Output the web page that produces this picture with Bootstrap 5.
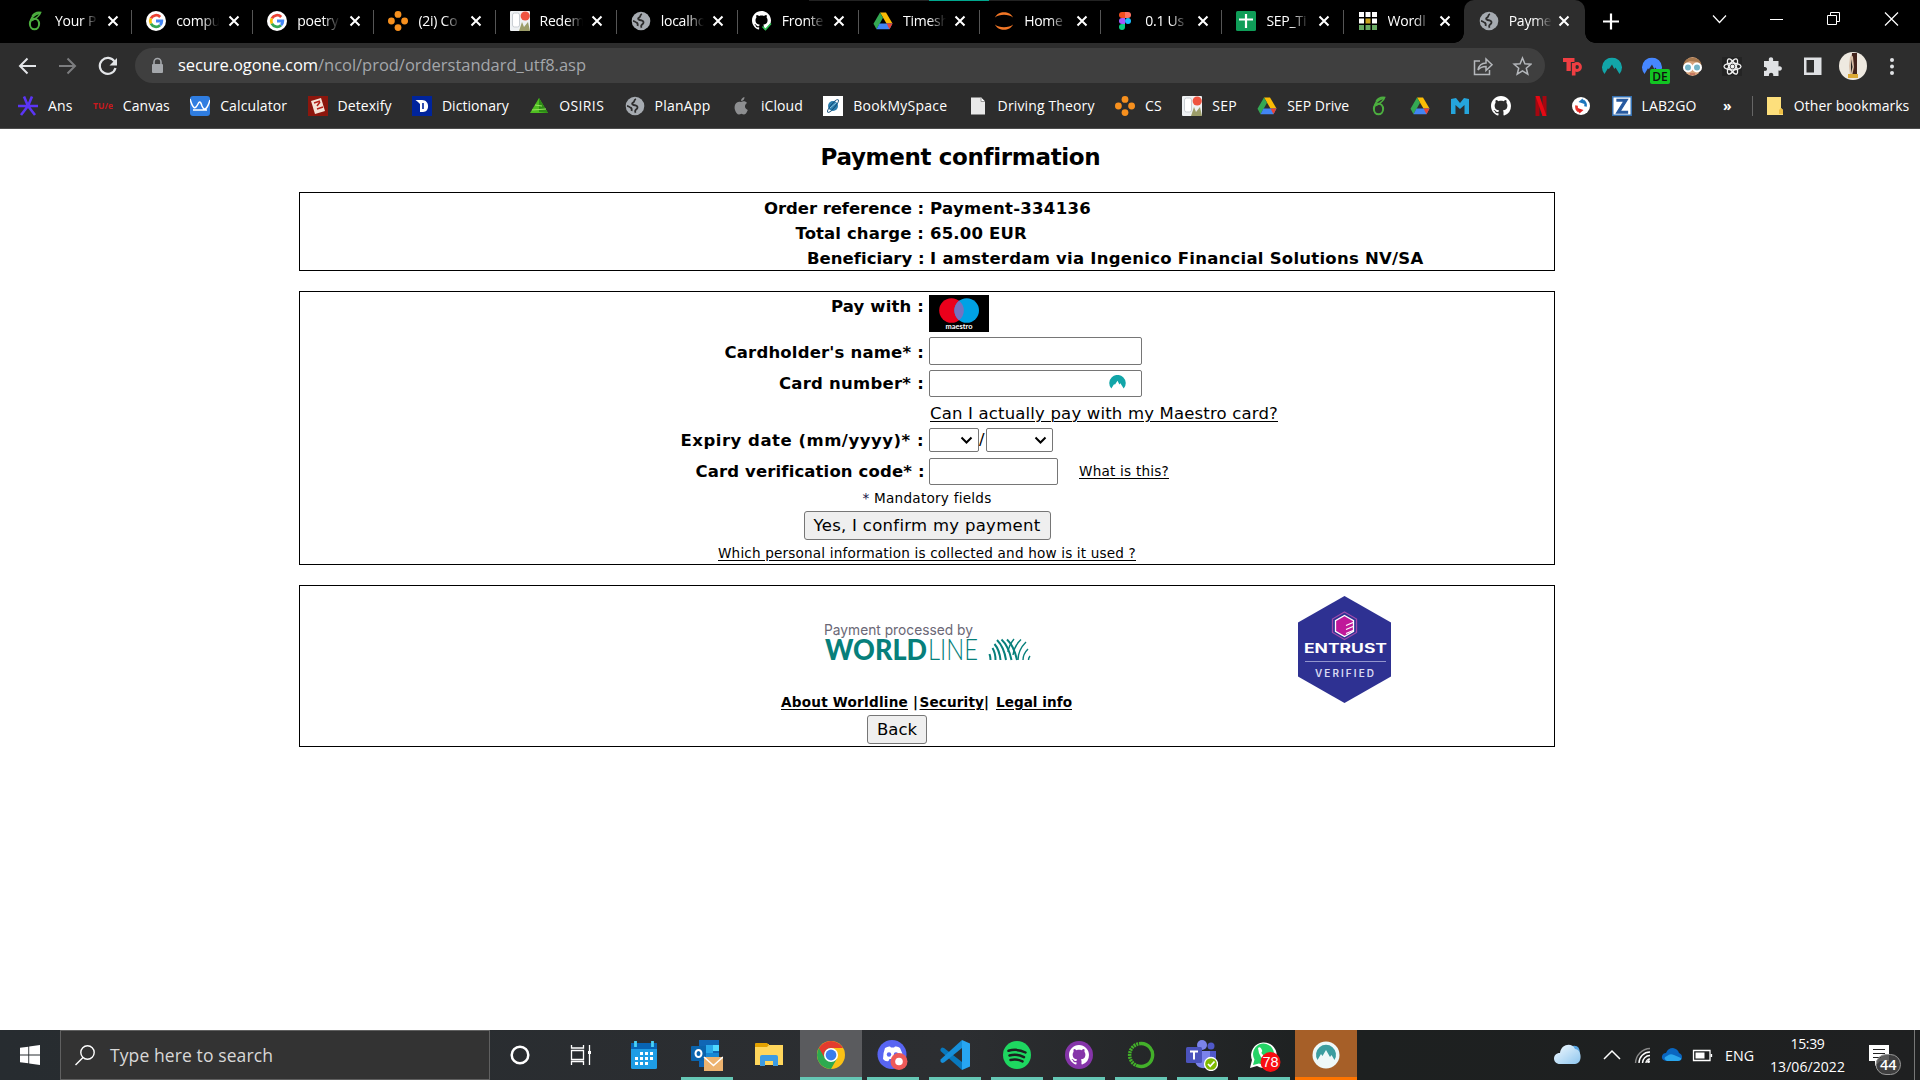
<!DOCTYPE html>
<html lang="en">
<head>
<meta charset="utf-8">
<title>Payment confirmation</title>
<link href="https://cdn.jsdelivr.net/npm/bootstrap@5.3.0/dist/css/bootstrap.min.css" rel="stylesheet">
<style>
:root{--ui:"Open Sans","Noto Sans",sans-serif;--page:"DejaVu Sans",sans-serif}
body{width:1920px;height:1080px;overflow:hidden;font-family:var(--page);color:#000;background:#fff}
svg{display:block;flex:none}
[data-w]{display:inline-block;white-space:pre;flex:none}
.tabstrip{height:43px;background:#000;font-family:var(--ui);font-size:14px;color:#fff;padding-left:10px}
.topline{left:809px;top:0;width:301px;height:1px;background:linear-gradient(90deg,#222 120px,#00a78e 120px,#00a78e 180px,#222 180px)}
.tab{width:121.15px;height:43px;padding:0 0 2px 15px}
.tab + .tab::before{content:"";position:absolute;left:0;top:10px;width:1px;height:24px;background:#555}
.tab-name{width:43px;margin-left:10px;overflow:hidden;white-space:nowrap;letter-spacing:-.25px;-webkit-mask-image:linear-gradient(90deg,#000 60%,transparent);mask-image:linear-gradient(90deg,#000 60%,transparent)}
.tab-x{margin-left:8.5px}
.tab.current{background:#2d2d2d;border-radius:10px 10px 0 0}
.tab.current .tab-x{margin-left:6.5px}
.tab.current::before{display:none}
.tab.current::after{content:"";position:absolute;left:-10px;right:-10px;bottom:0;height:10px;background:radial-gradient(circle at 0 0,transparent 9.5px,#2d2d2d 10px) left/10px 10px no-repeat,radial-gradient(circle at 100% 0,transparent 9.5px,#2d2d2d 10px) right/10px 10px no-repeat}
.toolrow{height:45px;background:#2d2d2d;padding-left:17px}
.omni{width:1410px;height:35px;border-radius:18px;background:#3f3f3f;margin-left:17px;padding:0 13px;font-family:var(--ui);font-size:16.5px;color:#fff}
.muted-url{color:#a4a7ab}
.marks{height:41px;background:#2d2d2d;border-bottom:1px solid #4d4d4d;padding:0 0 5px 18px;font-family:var(--ui);font-size:14px;color:#fff;gap:20.35px}
.bm{gap:10px}
.more-marks{margin-left:6px}
.other-marks{margin-right:13px}
.page{height:901px;padding-left:299px}
.page-title{font-size:23px;font-weight:700;width:1256px;height:63px;padding:12px 0 0 66px;line-height:32px}
.panel{width:1256px;border:1px solid #000;margin-bottom:20px}
.line-row{font-size:16.5px;line-height:20px}
.lab{width:624px;font-weight:700;text-align:right;margin-right:5px}
.val{padding-left:1px}
.box-in{border:1px solid #767676;border-radius:2px;background:#fff}
.btn-old{border:1px solid #767676;border-radius:3px;background:#efefef;height:29px;font-size:16.5px;line-height:27px;color:#000}
.small-t{font-size:13.6px;line-height:18px}
.page a{color:#000;text-decoration:underline;text-underline-offset:2px;text-decoration-thickness:1px}
.task{height:50px;background:linear-gradient(90deg,#272c30 0,#2c2e31 50%,#1d2020 70%,#1f2021 100%);font-family:var(--ui);color:#fff}
.findbox{width:430px;height:50px;background:#333;border:1px solid #606060;font-size:17.5px;color:#d8d8d8;padding-left:13px}
.app{width:61.95px;height:50px}
.app.on::after{content:"";position:absolute;left:5px;right:5px;bottom:0;height:3px;background:#65c7b5}
.app.live{background:#5a5b5e}.app.live::after{left:0;right:0}
.app.alert-app{background:#a65f28}.app.alert-app::after{background:#ff7400;left:0;right:0}
</style>
<script src="https://cdn.jsdelivr.net/npm/bootstrap@5.3.0/dist/js/bootstrap.bundle.min.js"></script>
</head>
<body class="d-flex flex-column">
<svg width="0" height="0" class="position-absolute">
<symbol id="globe" viewBox="0 0 20 20"><circle cx="10" cy="10" r="9.3" fill="#a6abb1"/><path d="M11 3c-2.500.8-1 2.400-2.600 3.400C6.800 7.200 6.500 8.700 8.500 9c2 .2 4.200.4 4 2.600-.2 1.800-1.800 1.500-2.300 3.200-.2.8.1 1.500.4 2M2 9.800c1.800.2 2.400 1.500 3.600 1.900 1.500.6 1.200 2 1 3.300" fill="none" stroke="#2d2d2d" stroke-width="1.800"/></symbol>
<symbol id="google" viewBox="0 0 20 20"><circle cx="10" cy="10" r="10" fill="#fff"/><g fill="none" stroke-width="2.800"><path d="M4.900 7.300A5.800 5.800 0 0 1 14.200 6" stroke="#ea4335"/><path d="M4.900 12.700a5.800 5.800 0 0 1 0-5.400" stroke="#fbbc05"/><path d="M14 14.200a5.800 5.800 0 0 1-9.100-1.500" stroke="#34a853"/><path d="M10 10h5.800c0 1.700-.6 3.200-1.800 4.200" stroke="#4285f4"/></g></symbol>
<symbol id="leaf" viewBox="0 0 20 20"><ellipse cx="9.500" cy="13" rx="4.600" ry="5.300" fill="none" stroke="#4caf3f" stroke-width="2"/><path d="M5 13C5 8 7.500 4 15.500 1.800 14 6 10.500 7.500 7 9.500M7 5.500C9 2 13 1 16 1.500" fill="none" stroke="#4caf3f" stroke-width="1.500"/></symbol>
<symbol id="dots" viewBox="0 0 20 20"><g fill="#f7901e"><circle cx="10" cy="3.400" r="3.400"/><circle cx="10" cy="16.600" r="3.400"/><circle cx="3.400" cy="10" r="3.400"/><circle cx="16.600" cy="10" r="3.400"/></g></symbol>
<symbol id="sep" viewBox="0 0 20 20"><rect width="20" height="20" rx="1" fill="#eef1f3"/><rect x="2.500" y="2" width="7" height="14" rx="2" fill="#fff" stroke="#c9ced3"/><path d="M9 20l3-9 2 5 4-5 2 9z" fill="#9c9d69"/><circle cx="15.200" cy="5" r="4.600" fill="#ee5340"/></symbol>
<symbol id="drive" viewBox="0 0 20 20"><path d="M7 1.500h6l6.500 11h-6z" fill="#fbbc04"/><path d="M7 1.500l3 5.200-6.500 11.500-3-5.500z" fill="#34a853"/><path d="M6.500 12.500h13l-3 5.700h-13z" fill="#4285f4"/><path d="M13.500 12.500h6l-3 5.700z" fill="#ea4335"/></symbol>
<symbol id="cat" viewBox="0 0 16 16"><path fill="currentColor" d="M8 0C3.580 0 0 3.580 0 8c0 3.540 2.290 6.530 5.470 7.590.4.070.55-.17.55-.38 0-.19-.01-.82-.01-1.490-2.010.37-2.530-.49-2.690-.94-.09-.23-.48-.94-.82-1.130-.28-.15-.68-.52-.01-.53.63-.01 1.080.58 1.230.82.72 1.210 1.870.87 2.330.66.070-.52.280-.87.510-1.070-1.780-.2-3.640-.89-3.640-3.950 0-.87.310-1.590.82-2.150-.08-.2-.36-1.020.08-2.120 0 0 .67-.21 2.200.82.640-.18 1.320-.27 2-.27s1.360.09 2 .27c1.530-1.040 2.200-.82 2.200-.82.440 1.100.160 1.920.080 2.120.51.560.82 1.270.82 2.150 0 3.070-1.870 3.750-3.650 3.950.29.250.54.730.54 1.480 0 1.070-.01 1.930-.01 2.200 0 .21.150.46.550.38A8.010 8.010 0 0 0 16 8c0-4.420-3.580-8-8-8"/></symbol>
<symbol id="peak" viewBox="0 0 20 17"><path fill="currentColor" d="M2.500 16.500A10 10 0 1 1 17.500 16.500L13.500 10 12.300 11.500 10 7 6.800 11.800 6 10.800z"/></symbol>
<symbol id="ex" viewBox="0 0 12 12"><path d="M1.500 1.500l9 9m0-9l-9 9" stroke="#fff" stroke-width="2"/></symbol>
</svg>

<div class="tabstrip d-flex position-relative">
 <div class="topline position-absolute"></div>
 <div class="tab d-flex align-items-center position-relative"><svg width="20" height="20"><use href="#leaf"/></svg><span class="tab-name">Your P</span><svg class="tab-x" width="12" height="12"><use href="#ex"/></svg></div>
 <div class="tab d-flex align-items-center position-relative"><svg width="20" height="20"><use href="#google"/></svg><span class="tab-name">compu</span><svg class="tab-x" width="12" height="12"><use href="#ex"/></svg></div>
 <div class="tab d-flex align-items-center position-relative"><svg width="20" height="20"><use href="#google"/></svg><span class="tab-name">poetry</span><svg class="tab-x" width="12" height="12"><use href="#ex"/></svg></div>
 <div class="tab d-flex align-items-center position-relative"><svg width="20" height="20"><use href="#dots"/></svg><span class="tab-name">(2i) Co</span><svg class="tab-x" width="12" height="12"><use href="#ex"/></svg></div>
 <div class="tab d-flex align-items-center position-relative"><svg width="20" height="20"><use href="#sep"/></svg><span class="tab-name">Redem</span><svg class="tab-x" width="12" height="12"><use href="#ex"/></svg></div>
 <div class="tab d-flex align-items-center position-relative"><svg width="20" height="20"><use href="#globe"/></svg><span class="tab-name">localho</span><svg class="tab-x" width="12" height="12"><use href="#ex"/></svg></div>
 <div class="tab d-flex align-items-center position-relative"><svg width="20" height="20" viewBox="0 0 20 20"><use href="#cat" width="19" height="19"/><path d="M9 15l4 4 7-8v9H9z" fill="#000"/><path d="M10.500 15.500l3 3 5.500-6" stroke="#2fc053" stroke-width="1.600" fill="none"/></svg><span class="tab-name">Fronte</span><svg class="tab-x" width="12" height="12"><use href="#ex"/></svg></div>
 <div class="tab d-flex align-items-center position-relative"><svg width="20" height="20"><use href="#drive"/></svg><span class="tab-name">Timesh</span><svg class="tab-x" width="12" height="12"><use href="#ex"/></svg></div>
 <div class="tab d-flex align-items-center position-relative"><svg width="20" height="20" viewBox="0 0 20 20"><path d="M1 6.500C4-.5 16-.5 19 6.500 15 2.800 5 2.800 1 6.500zM1 13.500c3 7 15 7 18 0-4 3.700-14 3.700-18 0z" fill="#f37726"/></svg><span class="tab-name">Home</span><svg class="tab-x" width="12" height="12"><use href="#ex"/></svg></div>
 <div class="tab d-flex align-items-center position-relative"><svg width="20" height="20" viewBox="0 0 20 20"><path d="M10 1H7a3 3 0 0 0 0 6h3z" fill="#f24e1e"/><path d="M10 1h3a3 3 0 0 1 0 6h-3z" fill="#ff7262"/><path d="M10 7H7a3 3 0 0 0 0 6h3z" fill="#a259ff"/><circle cx="13" cy="10" r="3" fill="#1abcfe"/><path d="M10 13H7a3 3 0 1 0 3 3z" fill="#0acf83"/></svg><span class="tab-name">0.1 Us</span><svg class="tab-x" width="12" height="12"><use href="#ex"/></svg></div>
 <div class="tab d-flex align-items-center position-relative"><svg width="20" height="20" viewBox="0 0 20 20"><rect width="20" height="20" rx="1.500" fill="#0f9d58"/><path d="M10 3v14M3 8.500h14" stroke="#fff" stroke-width="2.200"/></svg><span class="tab-name">SEP_Ti</span><svg class="tab-x" width="12" height="12"><use href="#ex"/></svg></div>
 <div class="tab d-flex align-items-center position-relative"><svg width="20" height="20" viewBox="0 0 20 20"><path fill="#fff" d="M1 1h5v5H1zM7.500 1h5v5h-5zM14 1h5v5h-5zM1 7.500h5v5H1zM14 7.500h5v5h-5z"/><path fill="#c9a520" d="M7.500 7.500h5v5h-5z"/><path fill="#6aaa64" d="M1 14h5v5H1zM7.500 14h5v5h-5zM14 14h5v5h-5z"/></svg><span class="tab-name">Wordl</span><svg class="tab-x ms-2" width="12" height="12"><use href="#ex"/></svg></div>
 <div class="tab current d-flex align-items-center position-relative"><svg width="20" height="20"><use href="#globe"/></svg><span class="tab-name">Payme</span><svg class="tab-x" width="12" height="12"><use href="#ex"/></svg></div>
 <div class="d-flex align-items-center ms-auto pb-1">
  <svg width="335" height="40" viewBox="1585 0 335 40" fill="none" stroke="#fff"><path d="M1603 21.500h16M1611 13.500v16" stroke-width="2.200"/><path d="M1713 15.500l6.500 7 6.500-7" stroke-width="1.200"/><path d="M1770 19.500h13"/><path d="M1827.500 15.500h9v9h-9zM1830.500 15v-2.500h9v9H1837"/><path d="M1885 12.500l13 13m0-13l-13 13" stroke-width="1.200"/></svg>
 </div>
</div>

<div class="toolrow d-flex align-items-center">
 <svg width="101" height="22" viewBox="17 54 101 22" fill="none" stroke-width="2"><path d="M36 65H20m7.500-7.500L20 65l7.500 7.500" stroke="#e3e5e8"/><path d="M59 65h16m-7.500-7.500L75 65l-7.500 7.500" stroke="#7c7d7f"/><path d="M114.500 60.500A8 8 0 1 0 115.500 67" stroke="#e3e5e8" stroke-width="2.200"/><path d="M117 57v7.500h-7.500z" fill="#e3e5e8"/></svg>
 <div class="omni d-flex align-items-center">
  <svg width="30" height="18" viewBox="0 0 30 18"><path d="M6 7V5a3.500 3.500 0 0 1 7 0v2" fill="none" stroke="#a4a7ab" stroke-width="1.600"/><rect x="4" y="7" width="11" height="9" rx="1" fill="#a4a7ab"/></svg>
  <span data-w="140">secure.ogone.com</span><span data-w="268" class="muted-url">/ncol/prod/orderstandard_utf8.asp</span>
  <svg class="ms-auto" width="60" height="22" viewBox="1472 54 60 22" fill="none" stroke="#b4b7bb" stroke-width="1.500"><path d="M1480 60h-5.500v13.500h15V69M1478 69c1-5 4-7 8-7v-4l6 5.800-6 5.700v-4c-4 0-6 1-8 3.500z"/><path d="M1522.500 57l2.400 5.700 6 .5-4.600 4 1.500 6-5.300-3.300-5.300 3.300 1.500-6-4.600-4 6-.5z"/></svg>
 </div>
 <svg class="ms-1" width="360" height="44" viewBox="1549 43 360 44">
  <path d="M1563 57h11.500v4h-3.700v9h-4.300v-9h-3.500z" fill="#ef3e42"/><path d="M1573.700 74.500V62" stroke="#ef3e42" stroke-width="3.600"/><circle cx="1577" cy="66" r="3.400" fill="none" stroke="#ef3e42" stroke-width="3"/>
  <use href="#peak" x="1602" y="56.500" width="20" height="17" color="#12a5a8"/>
  <use href="#peak" x="1642" y="56.500" width="20" height="17" color="#4687ff"/><rect x="1650" y="68" width="20" height="15" rx="2" fill="#12c422"/><text x="1660" y="80" font-size="12" font-weight="600" text-anchor="middle" font-family="Open Sans" fill="#111">DE</text>
  <ellipse cx="1692.500" cy="65.500" rx="8.500" ry="9.500" fill="#d9a47c"/><path d="M1683.500 65c-.5-11 18.500-11 18 0l-4-4-8-1-5 3z" fill="#a87a50"/><g fill="#75b5c8" stroke="#fff" stroke-width="2"><circle cx="1688" cy="66.500" r="4"/><circle cx="1697" cy="66.500" r="4"/></g><path d="M1690 73h5" stroke="#b7504a"/>
  <rect x="1722" y="56" width="20" height="19" fill="#242424"/><g fill="none" stroke="#f4f4f4" stroke-width="1.300" transform="translate(1732.500 65.500)"><ellipse rx="8.500" ry="3.300"/><ellipse rx="8.500" ry="3.300" transform="rotate(60)"/><ellipse rx="8.500" ry="3.300" transform="rotate(120)"/><circle r="1.300" fill="#fff"/></g>
  <path fill="#dfe1e4" d="M1764 60h5c-1.500-5 5.500-5 4 0h5.500v5.500c4.500-1.200 4.500 5.200 0 4V75h-5.300c1-4.500-5.200-4.500-4.200 0h-5v-5.200c4 1 4-4.800 0-3.800z"/>
  <path fill-rule="evenodd" fill="#dfe1e4" d="M1804 56.500h17.500v17.500H1804zM1806.500 59v12.500h7.500V59z"/>
  <circle cx="1853" cy="65" r="14" fill="#eee9e0"/><path d="M1852 52h5v25h-7z" fill="#43231c"/><path d="M1850 56q2-3 3 0l1 10-2 9h-2l-1-10z" fill="#d8bfa8"/><path d="M1851 58l1.500 8-1.500 6z" fill="#222"/><path d="M1848 73h10v4h-10z" fill="#dcaa35"/>
  <g fill="#dfe1e4"><circle cx="1892" cy="59" r="2"/><circle cx="1892" cy="65.500" r="2"/><circle cx="1892" cy="72" r="2"/></g>
 </svg>
</div>

<div class="marks d-flex align-items-center">
 <div class="bm d-flex align-items-center"><svg width="20" height="20" viewBox="0 0 20 20"><path d="M10 10h10M10 10l-7 9M10 10L6 .5M10 10L14 .5M10 10H0M10 10l7 9" stroke="#5b35f5" stroke-width="2.600"/></svg><span data-w="24.500">Ans</span></div>
 <div class="bm d-flex align-items-center"><svg width="20" height="20" viewBox="0 0 20 20"><text x="0" y="13" textLength="20" lengthAdjust="spacingAndGlyphs" font-size="8.500" font-weight="700" fill="#c8191e" font-family="Open Sans">TU/e</text></svg><span data-w="47">Canvas</span></div>
 <div class="bm d-flex align-items-center"><svg width="20" height="20" viewBox="0 0 20 20"><rect width="20" height="20" rx="3" fill="#2f7de1"/><path d="M0 3c3 10 5 11 8 5 2-4 3-1 4 2 2 5 5 4 8-6M3 14h14" fill="none" stroke="#fff" stroke-width="1.500"/></svg><span data-w="67">Calculator</span></div>
 <div class="bm d-flex align-items-center"><svg width="20" height="20" viewBox="0 0 20 20"><rect width="20" height="20" fill="#8c160d"/><path d="M3 5l10-3 4 13-10 3z" fill="#f4e3d7"/><path d="M6 7l6-2M9 13l6-2M9 10l3-4" stroke="#b42219" stroke-width="1.500"/></svg><span data-w="54">Detexify</span></div>
 <div class="bm d-flex align-items-center"><svg width="20" height="20" viewBox="0 0 20 20"><rect width="20" height="20" fill="#00249c"/><path d="M3.500 4H10c8 0 8 12 1 12H8V8L6 6z" fill="#fff"/><path d="M11 7v6" stroke="#00249c" stroke-width="1.600"/></svg><span data-w="67">Dictionary</span></div>
 <div class="bm d-flex align-items-center"><svg width="20" height="20" viewBox="0 0 20 20"><path d="M10 2l9 15H1z" fill="#4fbe21"/><path d="M10 2l9 15-9-1z" fill="#2d8b16"/><path d="M3 14l14-1M6 9l7 1" stroke="#96e45e"/></svg><span data-w="45">OSIRIS</span></div>
 <div class="bm d-flex align-items-center"><svg width="20" height="20"><use href="#globe"/></svg><span data-w="56">PlanApp</span></div>
 <div class="bm d-flex align-items-center"><svg width="20" height="20" viewBox="0 0 20 20"><path d="M10 6c2-1.500 5-1 6 1-3 2-2.500 5.500.8 7C15 19 13 19 10.500 17.700 7 19.500 5.500 18 4 14 2.500 9 5.500 4.500 10 6zM10 5c0-2 1.500-3.500 3.500-4 0 2.500-1.500 4-3.500 4z" fill="#8d8e90"/></svg><span data-w="42">iCloud</span></div>
 <div class="bm d-flex align-items-center"><svg width="20" height="20" viewBox="0 0 20 20"><rect width="20" height="20" fill="#fff"/><circle cx="10" cy="10" r="5" fill="#2b7dad"/><ellipse cx="10" cy="10" rx="8" ry="2" transform="rotate(-50 10 10)" fill="none" stroke="#144d77"/><path d="M7 12l6-5" stroke="#8cc4e0"/></svg><span data-w="94">BookMySpace</span></div>
 <div class="bm d-flex align-items-center"><svg width="20" height="20" viewBox="0 0 20 20"><path d="M3 1.500h10l4 4v13H3z" fill="#e9e9e9"/><path d="M13 1.500v4h4" fill="#fff" stroke="#999"/></svg><span data-w="97">Driving Theory</span></div>
 <div class="bm d-flex align-items-center"><svg width="20" height="20"><use href="#dots"/></svg><span data-w="17">CS</span></div>
 <div class="bm d-flex align-items-center"><svg width="20" height="20"><use href="#sep"/></svg><span data-w="24.500">SEP</span></div>
 <div class="bm d-flex align-items-center"><svg width="20" height="20"><use href="#drive"/></svg><span data-w="62">SEP Drive</span></div>
 <svg width="20" height="20"><use href="#leaf"/></svg>
 <svg width="20" height="20"><use href="#drive"/></svg>
 <svg width="20" height="20" viewBox="0 0 20 20"><path d="M1 3l5-1 4 5 4-5 5 1v15h-4.500V9L10 13 5.500 9v9H1z" fill="#25a5dc"/></svg>
 <svg width="20" height="20" color="#fff"><use href="#cat"/></svg>
 <svg width="20" height="20" viewBox="0 0 20 20"><path d="M4.500 0h4v20h-4zM11.500 0h4v20h-4z" fill="#a60710"/><path d="M4.500 0h4l7 20h-4z" fill="#e50914"/></svg>
 <svg width="20" height="20" viewBox="0 0 20 20"><circle cx="10" cy="10" r="9" fill="#fff"/><path d="M8 15.500a6 6 0 0 1-2.500-6" fill="none" stroke="#e6352b" stroke-width="2.600"/><path d="M6.500 12l6 2-4 3.500z" fill="#e01f20"/><path d="M12 4.500a6 6 0 0 1 2.500 6" fill="none" stroke="#1b76bd" stroke-width="2.600"/><path d="M13.500 8l-6-2 4-3.500z" fill="#1b76bd"/></svg>
 <div class="bm d-flex align-items-center"><svg width="20" height="20" viewBox="0 0 20 20"><rect x=".75" y=".75" width="18.500" height="18.500" fill="#fff" stroke="#3470b2" stroke-width="1.500"/><path d="M5 3.500h10.500L8 15.500h7.500v1.500H4.500L12 5H5z" fill="#275aa0" stroke="#275aa0" stroke-width="1.300"/></svg><span data-w="55">LAB2GO</span></div>
 <span class="more-marks fw-bold">»</span>
 <div class="other-marks bm d-flex align-items-center ms-auto"><svg width="32" height="20" viewBox="0 0 32 20"><path d="M.5 0v20" stroke="#666"/><path d="M15 1h14v11l2 2v5H15z" fill="#fddf7c"/><path d="M29 12l2 2v4h-4v-4z" fill="#eebf46"/></svg><span data-w="115.500">Other bookmarks</span></div>
</div>

<main class="page">
 <div class="page-title d-flex justify-content-center"><span data-w="279">Payment confirmation</span></div>
 <section class="panel" style="height:79px;padding-top:3px">
  <div class="line-row d-flex align-items-center" style="height:25px"><div class="lab"><span data-w="160">Order reference :</span></div><b class="val" data-w="162">Payment-334136</b></div>
  <div class="line-row d-flex align-items-center" style="height:25px"><div class="lab"><span data-w="128.500">Total charge :</span></div><b class="val" data-w="98">65.00 EUR</b></div>
  <div class="line-row d-flex align-items-center" style="height:25px"><div class="lab"><span data-w="117">Beneficiary :</span></div><b class="val" data-w="494.500">I amsterdam via Ingenico Financial Solutions NV/SA</b></div>
 </section>
 <section class="panel d-flex flex-column" style="height:274px;padding-top:3px">
  <div class="line-row d-flex" style="height:42px"><div class="lab" style="padding-top:2px"><span data-w="93">Pay with :</span></div>
   <svg width="60" height="37" viewBox="0 0 60 37"><rect width="60" height="37"/><circle cx="22.500" cy="15.500" r="12.300" fill="#eb001b"/><circle cx="37.700" cy="15.500" r="12.300" fill="#00a2e5"/><path d="M30.100 5.800a12.300 12.300 0 0 1 0 19.400 12.300 12.300 0 0 1 0-19.400z" fill="#7673c0"/><text x="16.500" y="34" textLength="27" lengthAdjust="spacingAndGlyphs" font-size="7.500" font-weight="700" fill="#fff" font-family="Lato">maestro</text></svg></div>
  <div class="line-row d-flex align-items-center" style="height:28px"><div class="lab pt-1"><span data-w="199.500">Cardholder's name* :</span></div><div class="box-in" style="width:213px;height:28px"></div></div>
  <div class="line-row d-flex align-items-center" style="height:36px"><div class="lab" style="padding-top:2px"><span data-w="145">Card number* :</span></div><div class="box-in d-flex justify-content-end" style="width:213px;height:27px;padding:4px 15px"><svg width="17" height="14" color="#12a5a8"><use href="#peak"/></svg></div></div>
  <div class="line-row d-flex align-items-center" style="height:24px;margin-left:629px;padding-top:2px"><a href="#" class="val" data-w="349">Can I actually pay with my Maestro card?</a></div>
  <div class="line-row d-flex align-items-center" style="height:28px;margin-top:1px"><div class="lab" style="padding-top:1px"><span data-w="243.500">Expiry date (mm/yyyy)* :</span></div>
   <div class="box-in d-flex align-items-center justify-content-end pe-1" style="width:50px;height:24px"><svg width="14" height="8" viewBox="0 0 14 8"><path d="M1.500 1.500l5 5 5-5" fill="none" stroke="#000" stroke-width="2"/></svg></div><span data-w="7">/</span><div class="box-in d-flex align-items-center justify-content-end pe-1" style="width:67px;height:24px"><svg width="14" height="8" viewBox="0 0 14 8"><path d="M1.500 1.500l5 5 5-5" fill="none" stroke="#000" stroke-width="2"/></svg></div></div>
  <div class="line-row d-flex align-items-center" style="height:32px;margin-top:1px"><div class="lab" style="padding-top:1px"><span data-w="228.500">Card verification code* :</span></div><div class="box-in" style="width:129px;height:27px"></div><a href="#" class="small-t" style="margin-left:21px" data-w="90">What is this?</a></div>
  <div class="small-t d-flex justify-content-center align-items-center" style="height:22px"><span data-w="129"><span style="color:#114">*</span> Mandatory fields</span></div>
  <div class="d-flex justify-content-center" style="padding-top:2px"><button type="button" class="btn-old p-0" style="width:247px"><span data-w="227">Yes, I confirm my payment</span></button></div>
  <div class="small-t d-flex justify-content-center" style="padding-top:4px"><a href="#" data-w="418">Which personal information is collected and how is it used ?</a></div>
 </section>
 <section class="panel" style="height:162px">
  <div class="d-flex" style="height:107px">
   <svg width="1254" height="120" viewBox="300 586 1254 120" style="overflow:visible">
    <text x="824" y="635" font-size="14.500" font-family="Inter" textLength="149" lengthAdjust="spacingAndGlyphs" fill="#6b6876">Payment processed by</text>
    <g font-family="Lato" fill="#077f7b"><text x="825" y="659.500" font-size="28.500" font-weight="900" textLength="102" lengthAdjust="spacingAndGlyphs">WORLD</text><text x="928" y="659.500" font-size="28.500" font-weight="300" textLength="50" lengthAdjust="spacingAndGlyphs">LINE</text></g>
    <g fill="none" stroke="#077f7b" stroke-width="2"><path d="M990.500 660q0-3-1-6M995.500 660q0-7-3-12M1000.500 660q-1-10-6-16M1006 660q-2-13-9-20M1011.500 660q-3-14-10-20.500M1017 660q-3-14-10-20.500"/><path d="M1008 652q1-7 6-13M1013 655q1-9 8-15.500M1018 660q0-10 8-18M1023 660q0-6 5-11M1028.500 660q0-2 1.500-4" stroke-width="1.400"/></g>
    <path d="M1344.500 596L1391 622.500v54L1344.500 703 1298 676.500v-54z" fill="#2e3192"/>
    <path d="M1344.500 612l12 7v13.500l-12 7-12-7V619z" fill="#2e3192" stroke="#a04aab" stroke-width="1.300"/><path d="M1344.500 615.500l9 5.200v10.600l-9 5.200-9-5.200v-10.600z" fill="#c0189a" stroke="#fff" stroke-width="1.300"/><path d="M1346 625.500l7-3M1346 629.500l7-3M1346 633.500l7-3" stroke="#fff" stroke-width="1.300"/>
    <text x="1304" y="653" font-size="12.500" font-weight="700" textLength="83" lengthAdjust="spacingAndGlyphs" fill="#fff" font-family="Inter">ENTRUST</text><path d="M1305 661.500h81" stroke="#9496ce"/><text x="1315" y="677" font-size="10" font-weight="600" textLength="59" fill="#d9daf2" font-family="Inter">VERIFIED</text>
   </svg></div>
  <div class="small-t fw-bold d-flex" style="padding-left:481px;height:22px"><a href="#" data-w="127">About Worldline</a><span data-w="11.500" style="padding-left:5px">|</span><a href="#" data-w="64.500">Security</a><span data-w="12">|</span><a href="#" data-w="76">Legal info</a></div>
  <button type="button" class="btn-old p-0" style="width:60px;margin-left:567px"><span data-w="40">Back</span></button>
 </section>
</main>

<footer class="task d-flex align-items-center">
 <div class="d-flex justify-content-center" style="width:60px"><svg width="20" height="20" viewBox="0 0 20 20"><path d="M0 2.800L8.300 1.700v7.800H0zM9.200 1.500L20 0v9.500H9.200zM0 10.500h8.300v7.800L0 17.200zM9.200 10.500H20V20L9.200 18.500z" fill="#fff"/></svg></div>
 <div class="findbox d-flex align-items-center"><svg width="22" height="22" viewBox="0 0 22 22"><circle cx="13.500" cy="8.500" r="6.700" fill="none" stroke="#fff" stroke-width="1.400"/><path d="M9 13.500L1.500 21" stroke="#fff" stroke-width="1.400"/></svg><span data-w="163" style="margin-left:14px">Type here to search</span></div>
 <div class="d-flex justify-content-center" style="width:60px"><svg width="20" height="20"><circle cx="10" cy="10" r="8.300" fill="none" stroke="#fff" stroke-width="2.500"/></svg></div>
 <div class="d-flex justify-content-center" style="width:61px"><svg width="22" height="20" viewBox="0 0 22 20" fill="none" stroke="#fff" stroke-width="1.300"><path d="M1.500 0v3h12V0M1.500 5.500h12v9h-12zM1.500 20v-3.500h12V20M19.500 0v20"/><path d="M18 6h3v3h-3z" fill="#fff" stroke="none"/></svg></div>
 <div class="app d-flex justify-content-center align-items-center" style="width:65px"><svg width="26" height="28" viewBox="0 0 26 28"><rect y="3" width="26" height="25" rx="1.500" fill="#1e9de6"/><path d="M0 2h26v6H0z" fill="#0864b4"/><path d="M4.500 0v6M21.500 0v6" stroke="#4ad2f5" stroke-width="2.800"/><path d="M9 12.500h13.500" stroke="#fff" stroke-width="3" stroke-dasharray="3 2"/><path d="M4 17.500h18.500M4 22.500h13" stroke="#fff" stroke-width="3" stroke-dasharray="3 2"/></svg></div>
 <div class="app on position-relative d-flex justify-content-center align-items-center"><svg width="32" height="32" viewBox="0 0 32 32"><rect x="8" y="1" width="20" height="27" fill="#1066b5"/><path d="M15 6h7v8h-7z" fill="#28a8ea"/><path d="M22 6h6v6h-6z" fill="#50d9ff"/><path d="M15 14h13v8H15z" fill="#1587d4"/><rect x="0" y="7" width="15" height="15" rx="1" fill="#0a64ad"/><ellipse cx="7.500" cy="14.500" rx="3" ry="3.600" fill="none" stroke="#fff" stroke-width="2"/><path d="M13 18h19v14H13z" fill="#edb36f"/><path d="M13 18l9.500 8.500L32 18" fill="none" stroke="#fff" stroke-width="1.600"/></svg></div>
 <div class="app d-flex justify-content-center align-items-center"><svg width="28" height="26" viewBox="0 0 28 26"><path d="M0 2h28v21H0z" fill="#ffd65c"/><path d="M0 2q0-1 1-1h11l2 2-2 2H0z" fill="#e3a100"/><path d="M14 0h14v3H14z" fill="#2d2f32"/><path d="M5 24v-9q0-2 2-2h14q2 0 2 2v9h-5v-5h-8v5z" fill="#3c9be2"/></svg></div>
 <div class="app on live position-relative d-flex justify-content-center align-items-center"><svg width="28" height="28" viewBox="0 0 28 28"><circle cx="14" cy="14" r="14" fill="#fbc116"/><path d="M1.900 7A14 14 0 0 0 14 28l6-10.500L14 14V7z" fill="#2da94f"/><path d="M1.900 7A14 14 0 0 1 26.100 7H14a7 7 0 0 0-6 10.500z" fill="#e33b2e"/><circle cx="14" cy="14" r="7" fill="#fff"/><circle cx="14" cy="14" r="5.400" fill="#3b7ded"/></svg></div>
 <div class="app on position-relative d-flex justify-content-center align-items-center"><svg width="31" height="30" viewBox="0 0 31 30"><circle cx="15" cy="14.500" r="14.500" fill="#5865f2"/><path d="M8 8q3-2 5-1.500l1 1h3l1-1q3-.5 5 1.500 3 5 3 11-3 3-5.500 2l-1-2h-7l-1 2q-3 1-5.500-2 0-6 2-11z" fill="#fff"/><g fill="#5865f2"><circle cx="12" cy="14.500" r="2.200"/><circle cx="19" cy="14.500" r="2.200"/></g><circle cx="22" cy="21.500" r="8.500" fill="#ed5a58"/><circle cx="22" cy="21.500" r="3.800" fill="#fff"/></svg></div>
 <div class="app on position-relative d-flex justify-content-center align-items-center"><svg width="30" height="30" viewBox="0 0 30 30"><path d="M2 7.500L4 8l18 14v8L.5 11V9z" fill="#0878bd"/><path d="M22 0v8L4 22.500 2 23 .5 21.500v-2z" fill="#168fda"/><path d="M22 0l8 3.500v23L22 30z" fill="#27a6f2"/></svg></div>
 <div class="app on position-relative d-flex justify-content-center align-items-center"><svg width="28" height="28" viewBox="0 0 28 28"><circle cx="14" cy="14" r="14" fill="#1ed760"/><path d="M5.500 9.800q9-2.500 17 1.700M6.500 14.500q7.500-2 14.500 1.700M7.500 19q6-1.600 12 1.400" fill="none" stroke="#1c211f" stroke-width="2.500" stroke-linecap="round"/></svg></div>
 <div class="app on position-relative d-flex justify-content-center align-items-center"><svg width="28" height="28" viewBox="0 0 28 28"><circle cx="14" cy="14" r="14" fill="#8534a9"/><g color="#fff"><use href="#cat" x="4" y="4" width="20" height="20"/></g></svg></div>
 <div class="app on position-relative d-flex justify-content-center align-items-center"><svg width="28" height="28" viewBox="0 0 28 28" fill="none" stroke="#43b02a"><path d="M14 2.500a11.500 11.500 0 1 1-5 21.800" stroke-width="3.400"/><path d="M14 2.500a11.500 11.500 0 0 0-5 21.800" stroke-width="3.500" stroke-dasharray="2 .8"/></svg></div>
 <div class="app on position-relative d-flex justify-content-center align-items-center"><svg width="32" height="32" viewBox="0 0 32 32"><circle cx="16" cy="6" r="5" fill="#7b83eb"/><circle cx="25" cy="7" r="3.500" fill="#5059c9"/><path d="M20 12h10v10q-2 5-7 4z" fill="#5059c9"/><path d="M9 12h15v11q-2 7-8 6-6-1-7-7z" fill="#7b83eb"/><rect x="0" y="8" width="16" height="16" rx="1.500" fill="#4b53bc"/><path d="M4 12.500h8M8 12.500v8" stroke="#fff" stroke-width="2"/><circle cx="25" cy="25" r="6.500" fill="#7fba00" stroke="#fff" stroke-width="1.300"/><path d="M22 25l2.200 2.300L28.500 22.500" fill="none" stroke="#fff" stroke-width="1.800"/></svg></div>
 <div class="app on position-relative d-flex justify-content-center align-items-center"><svg width="34" height="34" viewBox="0 0 34 34"><path d="M3 30l2-8A12.800 12.800 0 1 1 10 28z" fill="#fff"/><path d="M6 27l1.500-5.500A10.500 10.500 0 1 1 12 25.600z" fill="#25d366"/><path d="M11 10q2-2 3.500 1l.8 2-1 2q2 3 5 4.200l1.700-1.500 3.300 1.800q-1 3.500-4.300 3.200Q12 21 11 10z" fill="#fff"/><circle cx="23.500" cy="24" r="10" fill="#f80d12"/><text x="23.500" y="29.300" text-anchor="middle" font-size="14.500" fill="#fff" font-family="Liberation Sans">78</text></svg></div>
 <div class="app on alert-app position-relative d-flex justify-content-center align-items-center"><svg width="28" height="28" viewBox="0 0 28 28"><circle cx="14" cy="14" r="13.500" fill="#eef8f8"/><path d="M5.500 19A10 10 0 1 1 22.500 19L19.500 14l-1.500 2-4-7-3.500 6-1.500-2z" fill="#3b9d9f"/></svg></div>
 <svg class="ms-auto" width="220" height="50" viewBox="1550 1030 220 50">
  <defs><linearGradient id="cl" x2="1" y2="1"><stop stop-color="#f5fbff"/><stop offset="1" stop-color="#8dc5ee"/></linearGradient></defs>
  <path d="M1572 1046q8-2 8 8l-5-2z" fill="#5aa6e3"/><path d="M1560 1064c-8 0-8-11 0-11 1-9 12-11 15-4 7 0 8 15 0 15z" fill="url(#cl)"/>
  <path d="M1604 1059l8-8 8 8" fill="none" stroke="#fff" stroke-width="1.500"/>
  <g fill="none" stroke-width="1.400"><path d="M1635.500 1063A15 15 0 0 1 1650 1048.500" stroke="#888"/><path d="M1639 1063a11 11 0 0 1 11-11M1642.500 1063a7.500 7.500 0 0 1 7.500-7.500M1646 1063a4 4 0 0 1 4-4" stroke="#fff"/></g><circle cx="1648.500" cy="1061.500" r="1.500" fill="#fff"/>
  <path d="M1666 1061q-5-1-4-5 1-3 4-3 2-5 7-5 5 1 6 5 3 1 3 4 0 4-4 4z" fill="#0a66c0"/><path d="M1667 1061q-5-3 0-5 3-3 7-1l7 3q1 2-3 3z" fill="#2aa6ec"/>
  <path d="M1693.500 1050.500h16.500v10h-16.500zM1711.500 1054v3" fill="none" stroke="#fff" stroke-width="1.300"/><path d="M1695.500 1052.500h9v6h-9z" fill="#fff"/>
  <text x="1725" y="1060.500" font-size="14" textLength="29" lengthAdjust="spacingAndGlyphs" fill="#fff">ENG</text>
 </svg>
 <div class="text-center" style="width:75px;font-size:14px;line-height:23px"><div><span data-w="34">15:39</span></div><div><span data-w="75">13/06/2022</span></div></div>
 <svg width="75" height="50" viewBox="1845 1030 75 50"><path d="M1869 1045h20v16h-9l-5 5v-5h-6z" fill="#fff"/><path d="M1873 1049.500h12M1873 1053.500h12M1873 1057.500h8" stroke="#222" stroke-width="1.200"/><rect x="1876" y="1054.500" width="24.500" height="20" rx="10" fill="#444" fill-opacity=".85" stroke="#999"/><text x="1888.300" y="1070" font-size="14.500" font-weight="600" text-anchor="middle" fill="#fff">44</text><path d="M1914.500 1030v50" stroke="#777"/></svg>
</footer>
<script>
// Spread each label's letters so that it fills the width given in data-w.
document.querySelectorAll('[data-w]').forEach(function (el) {
  var w = parseFloat(el.dataset.w), n = el.textContent.length;
  if (n > 1) {
    el.style.letterSpacing = ((w - el.getBoundingClientRect().width) / n) + 'px';
  }
  el.style.width = w + 'px';
});
</script>
</body>
</html>
